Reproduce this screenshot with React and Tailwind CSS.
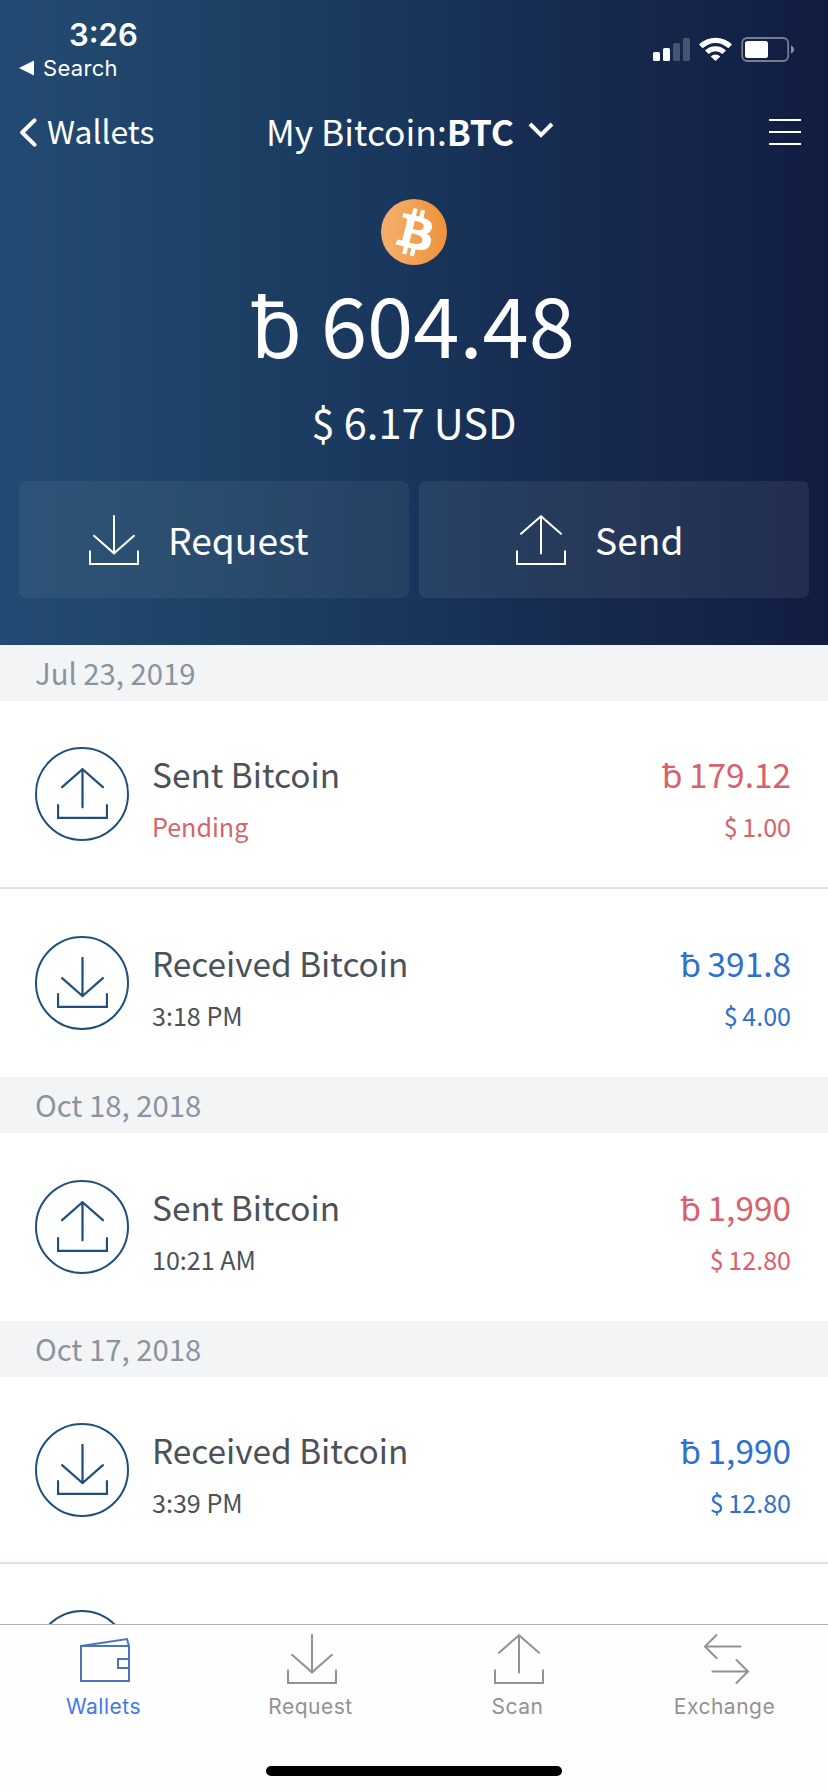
const cjk = "font-['Noto_Sans_CJK_SC','Noto_Sans',sans-serif]";
const inter = "font-['Inter','Liberation_Sans',sans-serif]";

function Tray({ up, className, w = 2 }) {
  return (
    <svg viewBox="0 0 50 50" className={className} fill="none" stroke="currentColor" strokeWidth={w}>
      <path d="M1 35.500V49h48V35.500" />
      <path strokeLinecap="round" d={up ? "M25 38.500V1.200M5 18.800L25 1.200l20 17.600" : "M25 1v37M5 20.800L25 38.300l20-17.500"} />
    </svg>
  );
}

function DateBar({ children }) {
  return (
    <div className="flex h-14 shrink-0 items-start bg-[#f3f4f6] pl-[35px]">
      <span className="text-[29.3px] leading-[54px] text-[#8a94a1]">{children}</span>
    </div>
  );
}

function Circle({ children }) {
  return (
    <div className="flex h-[94px] w-[94px] shrink-0 items-start justify-center rounded-full border-2 border-[#214f7c] pt-[19px] text-[#214f7c]">
      {children}
    </div>
  );
}

function Row({ sent, time, amount, fiat, pending, className }) {
  const tone = sent ? "text-[#d8616b]" : "text-[#2e70d0]";
  return (
    <div className={`flex shrink-0 items-start border-[#d9e3ed] pr-[37px] pl-[35px] ${className}`}>
      <Circle>
        <Tray up={sent} w={2.2} className="h-[51px] w-[51px]" />
      </Circle>
      <div className="mt-px ml-[23px] flex flex-1 flex-col">
        <span className="text-[33.4px] leading-[51px] text-[#4c5158]">{sent ? "Sent Bitcoin" : "Received Bitcoin"}</span>
        <span className={`text-[25.1px] leading-[54px] ${pending ? "text-[#d8616b]" : "text-[#4c5158]"}`}>{time}</span>
      </div>
      <div className={`mt-px flex flex-col items-end ${tone}`}>
        <span className="text-[33.4px] leading-[51px] [word-spacing:-1px]">ƀ {amount}</span>
        <span className="text-[25.1px] leading-[54px] [word-spacing:-1px]">$ {fiat}</span>
      </div>
    </div>
  );
}

function Tab({ label, active, children }) {
  return (
    <div className={`flex flex-1 flex-col items-center ${active ? "text-[#4377e8]" : "text-[#929292]"}`}>
      <div className="mt-[9px] flex h-[50px] justify-center pl-[3px]">{children}</div>
      <span className={`${inter} mt-[8px] text-[21px] leading-[30px] tracking-[0.5px]`}>{label}</span>
    </div>
  );
}

export default function App() {
  return (
    <div className={`${cjk} flex h-[1792px] w-[828px] flex-col overflow-hidden bg-white`}>
      <header className="flex h-[645px] shrink-0 flex-col bg-[linear-gradient(90deg,#234a73_0%,#20466b_15%,#1d3f64_30%,#19355b_50%,#172e54_62%,#16284b_75%,#132348_88%,#111c40_100%)] text-white">
        <div className={`${inter} flex h-[88px] justify-between pr-[33px] pl-[19px]`}>
          <div className="flex flex-col">
            <span className="mt-[17px] pl-[50px] text-[31px] leading-[36px] font-semibold">3:26</span>
            <span className="flex items-center text-[22px] leading-[30px] tracking-[0.3px]">
              <svg viewBox="0 0 15 16" className="mr-[9px] h-4 w-[15px] fill-current"><path d="M0 8L15 .5v15z" /></svg>
              Search
            </span>
          </div>
          <svg viewBox="0 0 142 26" className="mt-[36px] h-[26px] w-[142px]" fill="#fff">
            <rect x="0" y="16" width="7" height="9" rx="1.500" />
            <rect x="10" y="12" width="7" height="13" rx="1.500" />
            <rect x="20" y="7" width="7" height="18" rx="1.500" opacity=".22" />
            <rect x="30" y="2" width="7" height="23" rx="1.500" opacity=".22" />
            <path d="M46 8.600a23.500 23.500 0 0 1 33 0l-3.700 3.700a18.200 18.200 0 0 0-25.600 0z" />
            <path d="M52 14.600a15 15 0 0 1 21 0l-3.700 3.500a9.800 9.800 0 0 0-13.600 0z" />
            <path d="M57.700 20.400a6.800 6.800 0 0 1 9.600 0L62.500 25z" />
            <rect x="89.200" y="2" width="46" height="23" rx="5" fill="none" stroke="#fff" strokeOpacity=".42" strokeWidth="1.800" />
            <rect x="92" y="5" width="23" height="17" rx="2.500" />
            <path d="M138 9.500c4 1.500 4 6.500 0 8z" opacity=".5" />
          </svg>
        </div>
        <div className="grid h-[92px] grid-cols-[1fr_auto_1fr] items-start pr-[27px] pl-[19px]">
          <div className="flex items-start">
            <svg viewBox="0 0 18 30" className="mt-[30px] mr-[10px] h-[30px] w-[18px]" fill="none" stroke="#fff" strokeWidth="4" strokeLinecap="round" strokeLinejoin="round"><path d="M15.500 2.300L3.200 14.500l12.300 12.200" /></svg>
            <span className="mt-[17px] text-[31.9px] leading-[50px]">Wallets</span>
          </div>
          <div className="flex items-start">
            <span className="mt-[17px] text-[35.4px] leading-[51px]">My Bitcoin:<b>BTC</b></span>
            <svg viewBox="0 0 26 16" className="mt-[34px] ml-[14px] h-4 w-[26px]" fill="none" stroke="#fff" strokeWidth="4"><path d="M2 2l11 11L24 2" /></svg>
          </div>
          <div className="mt-[31px] flex h-[26px] w-8 flex-col justify-between justify-self-end">
            <i className="h-0.5 bg-white" /><i className="h-0.5 bg-white" /><i className="h-0.5 bg-white" />
          </div>
        </div>
        <div className="flex h-[301px] flex-col items-center">
          <svg viewBox="0 0 66 66" className="mt-[19px] h-[66px] w-[66px]">
            <defs><linearGradient id="coin"><stop stopColor="#f5b06c" /><stop offset="1" stopColor="#ef923b" /></linearGradient></defs>
            <circle cx="33" cy="33" r="33" fill="url(#coin)" />
            <path
              transform="translate(33.200 32.500) scale(2.430) translate(-15.900 -15.700)"
              fill="#fff"
              d="M23.189 14.02c.314-2.096-1.283-3.223-3.465-3.975l.708-2.84-1.728-.43-.69 2.765c-.454-.114-.92-.22-1.385-.326l.695-2.783L15.596 6l-.708 2.839c-.376-.086-.746-.17-1.104-.26l.002-.009-2.384-.595-.46 1.846s1.283.294 1.256.312c.7.175.826.638.805 1.006l-.806 3.235c.048.012.11.03.18.057l-.183-.045-1.13 4.532c-.086.212-.303.531-.793.41.018.025-1.256-.313-1.256-.313l-.858 1.978 2.25.561c.418.105.828.215 1.231.318l-.715 2.872 1.727.43.708-2.84c.472.127.93.245 1.378.357l-.706 2.828 1.728.43.715-2.866c2.948.558 5.164.333 6.097-2.333.752-2.146-.037-3.385-1.588-4.192 1.13-.26 1.98-1.003 2.207-2.538zm-3.95 5.538c-.533 2.147-4.148.986-5.32.695l.95-3.805c1.172.293 4.929.872 4.37 3.11zm.535-5.569c-.487 1.953-3.495.96-4.47.717l.86-3.45c.975.243 4.118.696 3.61 2.733z"
            />
          </svg>
          <span className="mt-[12px] pr-[2px] text-[83.2px] leading-[90px]">ƀ 604.48</span>
          <span className="mt-[26px] text-[41.5px] leading-[56px]">$ 6.17 USD</span>
        </div>
        <div className="grid grid-cols-2 gap-[10px] px-[19px]">
          <div className="flex h-[117px] items-start rounded-[7px] bg-[#e6fff0]/6 pl-[70px]">
            <Tray className="mt-[34px] h-[50px] w-[50px]" />
            <span className="mt-[31px] ml-[29px] text-[37.2px] leading-[54px]">Request</span>
          </div>
          <div className="flex h-[117px] items-start rounded-[7px] bg-[#f4fff4]/7 pl-[97px]">
            <Tray up className="mt-[34px] h-[50px] w-[50px]" />
            <span className="mt-[31px] ml-[29px] text-[37.2px] leading-[54px]">Send</span>
          </div>
        </div>
      </header>
      <main className="flex h-[979px] shrink-0 flex-col overflow-hidden">
        <DateBar>Jul 23, 2019</DateBar>
        <Row sent pending time="Pending" amount="179.12" fiat="1.00" className="h-[188px] border-b-2 pt-[46px]" />
        <Row time="3:18 PM" amount="391.8" fiat="4.00" className="h-[188px] pt-[47px]" />
        <DateBar>Oct 18, 2018</DateBar>
        <Row sent time="10:21 AM" amount="1,990" fiat="12.80" className="h-[188px] pt-[47px]" />
        <DateBar>Oct 17, 2018</DateBar>
        <Row time="3:39 PM" amount="1,990" fiat="12.80" className="h-[187px] border-b-2 pt-[46px]" />
        <div className="flex shrink-0 pt-[46px] pl-[35px]">
          <Circle />
        </div>
      </main>
      <nav className="flex h-[168px] shrink-0 flex-col items-center border-t border-[#b2b2b2] bg-[#fefefe]">
        <div className="flex h-[141px] w-full">
          <Tab label="Wallets" active>
            <svg viewBox="0 0 50 50" className="h-[50px] w-[50px]" fill="none" stroke="#4b74bd" strokeWidth="2">
              <path d="M1 12h48v35H1zM1 12L47 5l2 7M49 25H38v9h11" />
            </svg>
          </Tab>
          <Tab label="Request"><Tray className="h-[50px] w-[50px]" /></Tab>
          <Tab label="Scan"><Tray up className="h-[50px] w-[50px]" /></Tab>
          <Tab label="Exchange">
            <svg viewBox="0 0 50 50" className="h-[50px] w-[50px]" fill="none" stroke="currentColor" strokeWidth="2" strokeLinecap="round">
              <path d="M39.500 12.500H4M15.500 1L4 12.500 15.500 24M11.500 37.500h35M35.500 26L47 37.500 35.500 49" />
            </svg>
          </Tab>
        </div>
        <div className="h-[10px] w-[296px] rounded-full bg-black" />
      </nav>
    </div>
  );
}
